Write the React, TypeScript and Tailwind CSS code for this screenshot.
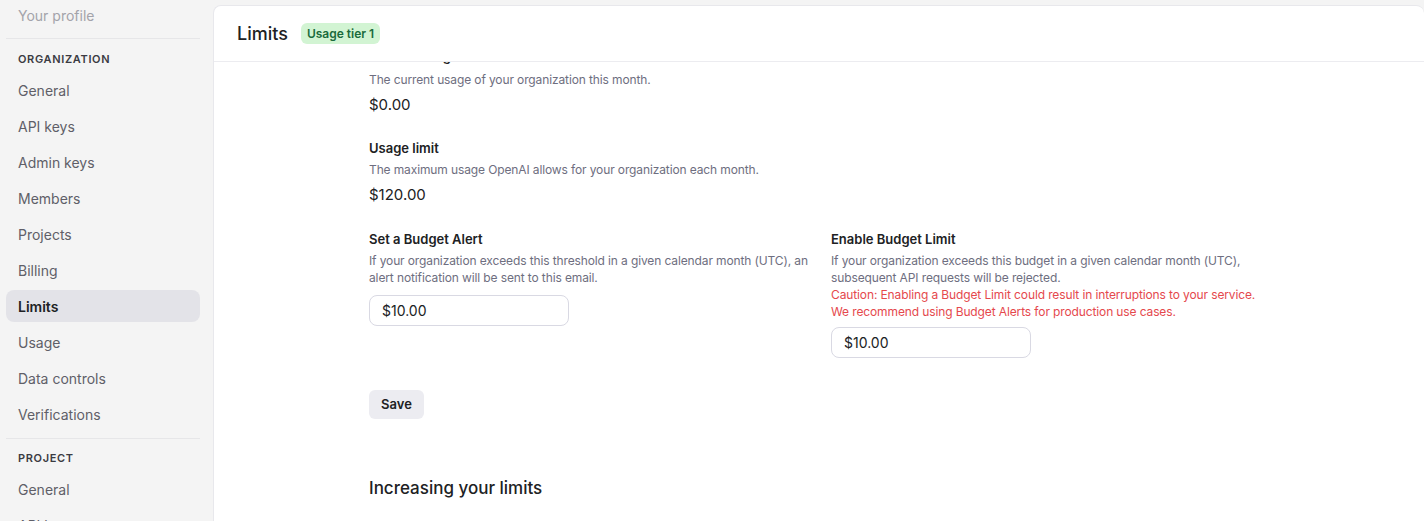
import React from "react";

const orgItems = ["General", "API keys", "Admin keys", "Members", "Projects", "Billing", "Limits", "Usage", "Data controls", "Verifications"];

function NavItem({ label, active }: { label: string; active?: boolean }) {
  return (
    <div
      className={`h-[32px] flex items-center px-3 rounded-lg text-[14px] ${
        active ? "bg-[#e3e3e8] text-[#202123] font-semibold" : "text-[#5f5f68]"
      }`}
    >
      {label}
    </div>
  );
}

function Field({ title, desc, value, gap = "mt-[3px]" }: { title: string; desc: string; value: string; gap?: string }) {
  return (
    <div>
      <div className="text-[13px] leading-[20px] font-semibold text-[#202123]">{title}</div>
      <div className={`${gap} text-[12px] leading-[17px] tracking-[-0.01em] text-[#6e6e80]`}>{desc}</div>
      <div className="mt-[6px] text-[15px] leading-[22px] text-[#202123]">{value}</div>
    </div>
  );
}

export default function App() {
  return (
    <div
      className="h-[521px] w-[1424px] overflow-hidden bg-[#f4f4f4] flex"
      style={{ fontFamily: "Inter, 'Noto Sans', sans-serif" }}
    >
      {/* sidebar */}
      <aside className="w-[213px] shrink-0 pl-[6px] pr-[13px] overflow-hidden">
        <div className="-mt-[1px] h-[32px] flex items-center px-3 text-[14px] text-[#a3a3aa]">Your profile</div>
        <div className="mt-[7px] border-t border-[#e6e6e8]" />
        <div className="mt-[13px] px-3 text-[11px] leading-[14px] font-semibold tracking-[0.06em] text-[#3b3b42]">ORGANIZATION</div>
        <div className="mt-[8px] flex flex-col gap-[4px]">
          {orgItems.map((l) => (
            <NavItem key={l} label={l} active={l === "Limits"} />
          ))}
        </div>
        <div className="mt-[8px] border-t border-[#e6e6e8]" />
        <div className="mt-[12px] px-3 text-[11px] leading-[14px] font-semibold tracking-[0.06em] text-[#3b3b42]">PROJECT</div>
        <div className="mt-[8px] flex flex-col gap-[4px]">
          <NavItem label="General" />
          <NavItem label="API keys" />
        </div>
      </aside>

      {/* main panel */}
      <main className="flex-1 mt-[5px] bg-white border border-[#e8e8ec] border-b-0 border-r-0 rounded-t-lg flex flex-col overflow-hidden">
        <header className="h-[56px] shrink-0 flex items-center gap-[13px] px-[23px] border-b border-[#ececf0]">
          <h1 className="text-[18px] text-[#202123] font-medium">Limits</h1>
          <span className="h-[21px] px-[6px] flex items-center rounded-md bg-[#d2f4d3] text-[#1a6b3c] text-[12px] font-semibold">
            Usage tier 1
          </span>
        </header>
        <div className="flex-1 overflow-hidden">
          <div className="-mt-[16px] pl-[155px] w-[1080px]">
            <Field
              title="Current usage"
              desc="The current usage of your organization this month."
              value="$0.00"
              gap="mt-[5px]"
            />
            <div className="mt-[22px]">
              <Field title="Usage limit" desc="The maximum usage OpenAI allows for your organization each month." value="$120.00" />
            </div>
            <div className="mt-[23px] grid grid-cols-[462px_462px]">
              <div>
                <div className="text-[13px] leading-[20px] font-semibold text-[#202123]">Set a Budget Alert</div>
                <div className="mt-[3px] pr-[8px] text-[12px] leading-[17px] tracking-[-0.01em] text-[#6e6e80]">
                  If your organization exceeds this threshold in a given calendar month (UTC), an alert notification will be sent to this email.
                </div>
                <input
                  defaultValue="$10.00"
                  className="mt-[9px] w-[200px] h-[31px] px-[12px] rounded-lg border border-[#d9d9e3] text-[14px] text-[#202123] outline-none"
                />
              </div>
              <div>
                <div className="text-[13px] leading-[20px] font-semibold text-[#202123]">Enable Budget Limit</div>
                <div className="mt-[3px] text-[12px] leading-[17px] tracking-[-0.01em] text-[#6e6e80]">
                  If your organization exceeds this budget in a given calendar month (UTC),
                  <br />
                  subsequent API requests will be rejected.
                  <br />
                  <span className="text-[#e5484d]">
                    Caution: Enabling a Budget Limit could result in interruptions to your service.
                    <br />
                    We recommend using Budget Alerts for production use cases.
                  </span>
                </div>
                <input
                  defaultValue="$10.00"
                  className="mt-[7px] w-[200px] h-[31px] px-[12px] rounded-lg border border-[#d9d9e3] text-[14px] text-[#202123] outline-none"
                />
              </div>
            </div>
            <button className="mt-[32px] h-[29px] w-[55px] rounded-md bg-[#ececf1] text-[13px] font-semibold text-[#202123]">
              Save
            </button>
            <h2 className="mt-[57px] text-[17px] leading-[24px] font-medium text-[#202123]">Increasing your limits</h2>
          </div>
        </div>
      </main>
    </div>
  );
}
